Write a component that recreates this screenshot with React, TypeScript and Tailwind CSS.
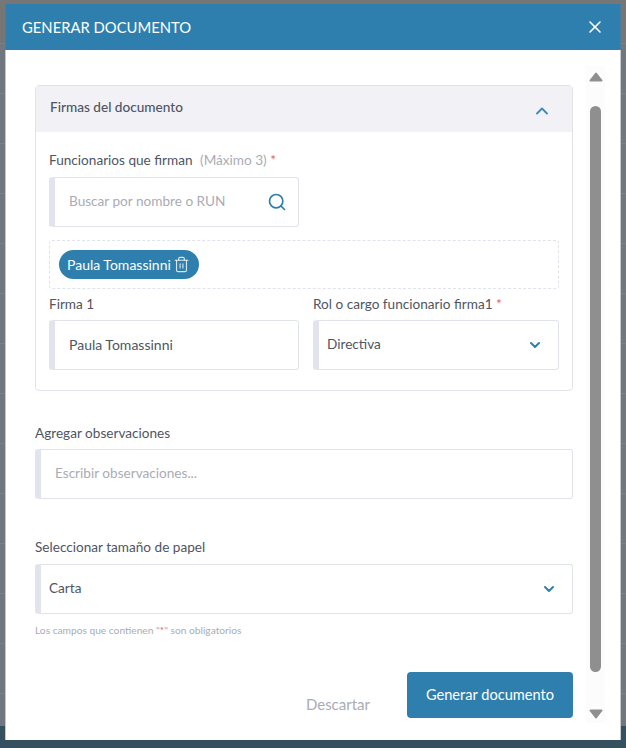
import { ChevronDown, ChevronUp, Search, Trash2, X } from "lucide-react";

const fieldBox = "flex h-[50px] items-center rounded-[3px] border border-[#e1e3ec] border-l-[6px] border-l-[#e1e4ec] bg-white text-[13.6px]";
const label = "text-[13.6px] leading-5";

function Required() {
  return <span className="text-[#e8596a]"> *</span>;
}

function ScrollArrow({ down }: { down?: boolean }) {
  return (
    <svg width="14" height="10" viewBox="0 0 14 10" className={down ? "rotate-180" : ""}>
      <path d="M7 1.5 L12.5 8.5 H1.5 Z" fill="#8f8f8f" stroke="#8f8f8f" strokeWidth="2" strokeLinejoin="round" />
    </svg>
  );
}

export default function App() {
  return (
    <div className="relative h-[748px] w-[626px] overflow-hidden bg-[#767676] font-['Lato','Noto_Sans',sans-serif] text-[#4f5563]">
      {/* page behind the overlay */}
      <div className="absolute inset-x-0 top-[43px] h-[683px] overflow-hidden bg-[#70777f]">
        {Array.from({ length: 14 }, (_, i) => (
          <div key={i} className="h-[50px] border-t border-[#7b8189]" />
        ))}
      </div>
      <div className="absolute inset-x-0 bottom-0 h-[22px] bg-[#36505f]" />

      <div className="relative ml-[5px] mt-[4px] flex h-[736px] w-[616px] flex-col">
        <header className="flex h-[46px] shrink-0 items-center justify-between border-x border-[#4a7d9e] bg-[#2e7fae] pl-[16px] pr-[15.5px] text-white">
          <h1 className="text-[14.8px]">GENERAR DOCUMENTO</h1>
          <X size={20} strokeWidth={1.9} />
        </header>

        <div className="flex min-h-0 flex-1 border-x border-[#c6c9cb] bg-white">
          <main className="w-[567px] shrink-0 pl-[29px] pt-[35px]">
            {/* Firmas */}
            <section className="rounded-[4px] border border-[#e1e3ec]">
              <div className="flex h-[46px] items-center justify-between bg-[#f1f1f6] pl-[14px] pr-[20px]">
                <h2 className="-mt-[3px] text-[13.6px] font-medium">Firmas del documento</h2>
                <ChevronUp size={20} strokeWidth={2.2} className="mt-[3px] text-[#3f8ab5]" />
              </div>
              <div className="px-[13px] pb-[20px] pt-[18px]">
                <p className={label}>
                  Funcionarios que firman <span className="ml-1 text-[#a9acb6]">(Máximo 3)</span>
                  <Required />
                </p>
                <div className={`${fieldBox} mt-[7px] w-[250px] justify-between pl-[14px] pr-[11px] text-[#a9acb6]`}>
                  <span className="-mt-[2px]">Buscar por nombre o RUN</span>
                  <Search size={20} strokeWidth={2} className="text-[#2e7fae]" />
                </div>
                <div className="mt-[13px] flex h-[49px] items-center rounded-[3px] border border-dashed border-[#e1e3ec] px-[9px]">
                  <span className="flex h-[29px] items-center gap-[2px] rounded-full bg-[#2e7fae] pl-[8px] pr-[9px] text-[14px] text-white">
                    Paula Tomassinni
                    <Trash2 size={17} strokeWidth={1.6} className="text-white/80" />
                  </span>
                </div>
                <div className="mt-[5px] grid grid-cols-[250px_246px] gap-x-[14px]">
                  <div>
                    <p className={label}>Firma 1</p>
                    <div className={`${fieldBox} mt-[6px] pl-[14px] text-[14px]`}>
                      <span className="-mt-[2px]">Paula Tomassinni</span>
                    </div>
                  </div>
                  <div>
                    <p className={label}>
                      Rol o cargo funcionario firma1
                      <Required />
                    </p>
                    <div className={`${fieldBox} mt-[6px] justify-between pl-[8px] pr-[15.5px]`}>
                      <span className="-mt-[2px]">Directiva</span>
                      <ChevronDown size={16} strokeWidth={3} className="text-[#2e7fae]" />
                    </div>
                  </div>
                </div>
              </div>
            </section>

            <p className={`${label} mt-[32px]`}>Agregar observaciones</p>
            <div className={`${fieldBox} mt-[6px] pl-[14px] text-[#a9acb6]`}>
              <span className="-mt-[2px]">Escribir observaciones...</span>
            </div>

            <p className={`${label} mt-[38px]`}>Seleccionar tamaño de papel</p>
            <div className={`${fieldBox} mt-[7px] justify-between pl-[8px] pr-[15.5px]`}>
              <span className="-mt-[2px]">Carta</span>
              <ChevronDown size={16} strokeWidth={3} className="text-[#2e7fae]" />
            </div>
            <p className="mt-[9px] text-[10.2px] leading-[14px] text-[#a9acb6]">
              Los campos que contienen "<span className="text-[#e8596a]">*</span>" son obligatorios
            </p>

            <div className="mt-[35px] flex items-start justify-end">
              <button className="mr-[37px] mt-[22px] text-[15px] leading-5 text-[#a9acb6]">Descartar</button>
              <button className="h-[46px] w-[166px] rounded-[4px] bg-[#2e7fae] text-[14.6px] text-white">Generar documento</button>
            </div>
          </main>

          {/* scrollbar */}
          <div className="mb-[17px] ml-[13px] mt-[16px] flex w-[19px] flex-col items-center bg-[#fcfcfc] pb-[4px] pt-[6px]">
            <ScrollArrow />
            <div className="mb-[37px] mt-[24px] w-[11px] flex-1 rounded-full bg-[#8f8f8f]" />
            <ScrollArrow down />
          </div>
        </div>
      </div>
    </div>
  );
}
